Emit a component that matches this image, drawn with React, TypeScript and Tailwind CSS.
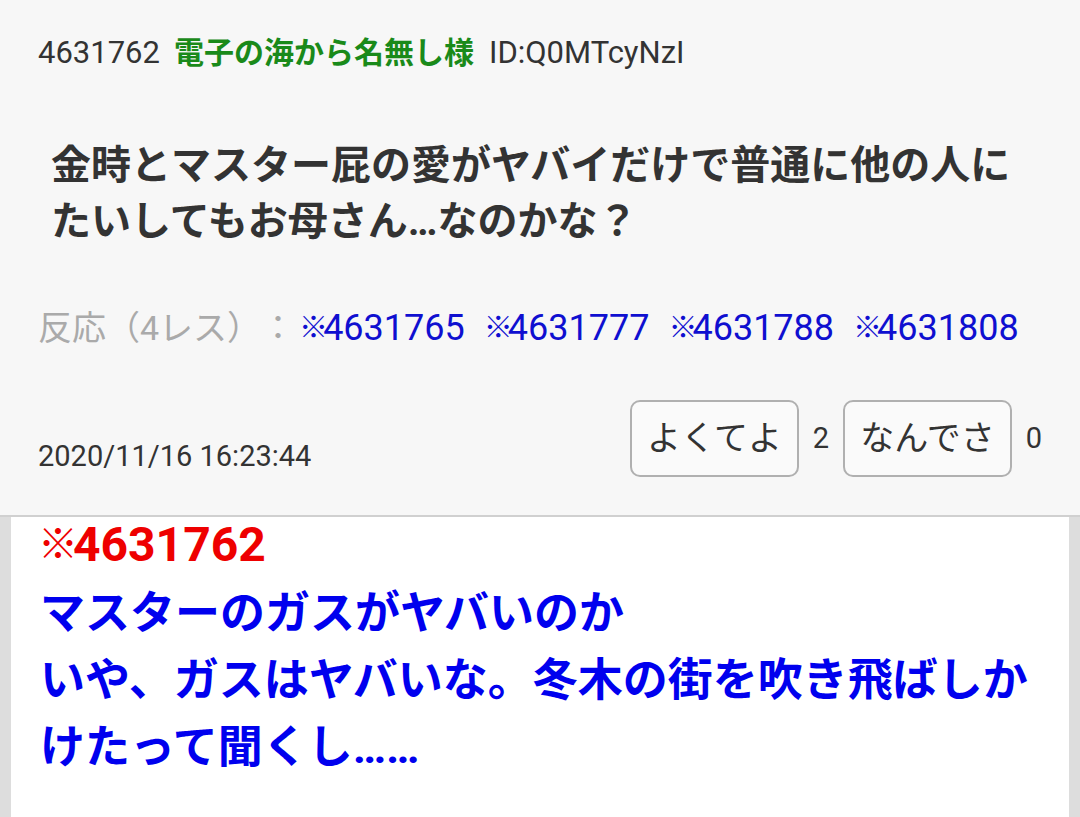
const font = "font-['Roboto','Noto_Sans_CJK_JP',sans-serif]";

const replies = ['4631765', '4631777', '4631788', '4631808'];

function ReactionButton({ label, count }: { label: string; count: number }) {
  return (
    <div className="flex items-center">
      <button className="h-[77px] w-[169px] rounded-[10px] border-2 border-[#b0b0b0] bg-[#fafafa] text-[34px] text-[#333]">
        {label}
      </button>
      <span className="w-[44px] text-center text-[29px] text-[#333]">{count}</span>
    </div>
  );
}

export default function App() {
  return (
    <div className={`w-[1080px] h-[817px] overflow-hidden bg-[#dddddd] ${font}`}>
      <div className="h-[515px] bg-[#f7f7f7] pl-[38px] pr-[24px] pt-[33px]">
        <div className="flex items-center h-[40px] leading-[40px]">
          <span className="text-[31px] text-[#333]">4631762</span>
          <span className="ml-[14px] text-[30px] font-bold text-[#1a8a1a]">電子の海から名無し様</span>
          <span className="ml-[15px] text-[31px] text-[#333]">ID:Q0MTcyNzI</span>
        </div>

        <p className="mt-[65px] pl-[13px] text-[40px] leading-[56px] font-bold text-[#333]">
          金時とマスター屁の愛がヤバイだけで普通に他の人に
          <br />
          たいしてもお母さん…なのかな？
        </p>

        <div className="mt-[56px] flex items-center h-[44px] leading-[44px]">
          <span className="text-[34px] text-[#aaaaaa] [text-spacing-trim:space-all]">反応（4レス）：</span>
          <div className="ml-[4px] flex gap-[19px]">
            {replies.map((r) => (
              <span key={r} className="text-[36px] text-[#0f0fd0]">
                <span className="text-[29px] tracking-[-5px] align-[2px]">※</span>
                {r}
              </span>
            ))}
          </div>
        </div>

        <div className="mt-[49px] flex items-center justify-between">
          <span className="mt-[36px] text-[29px] text-[#333]">2020/11/16 16:23:44</span>
          <div className="flex">
            <ReactionButton label="よくてよ" count={2} />
            <ReactionButton label="なんでさ" count={0} />
          </div>
        </div>
      </div>

      <div className="border-t-2 border-[#d0d0d0] px-[11px]">
        <div className="h-[300px] bg-white pl-[27px]">
          <p className="text-[48px] leading-[56px] font-bold text-[#ee0000]">
            <span className="text-[40px] tracking-[-5px] align-[3px]">※</span>
            4631762
          </p>
          <p className="mt-[7px] pl-[2px] text-[45px] leading-[67px] font-bold text-[#0000ee]">
            マスターのガスがヤバいのか
            <br />
            いや、ガスはヤバいな。冬木の街を吹き飛ばしか
            <br />
            けたって聞くし……
          </p>
        </div>
      </div>
    </div>
  );
}
